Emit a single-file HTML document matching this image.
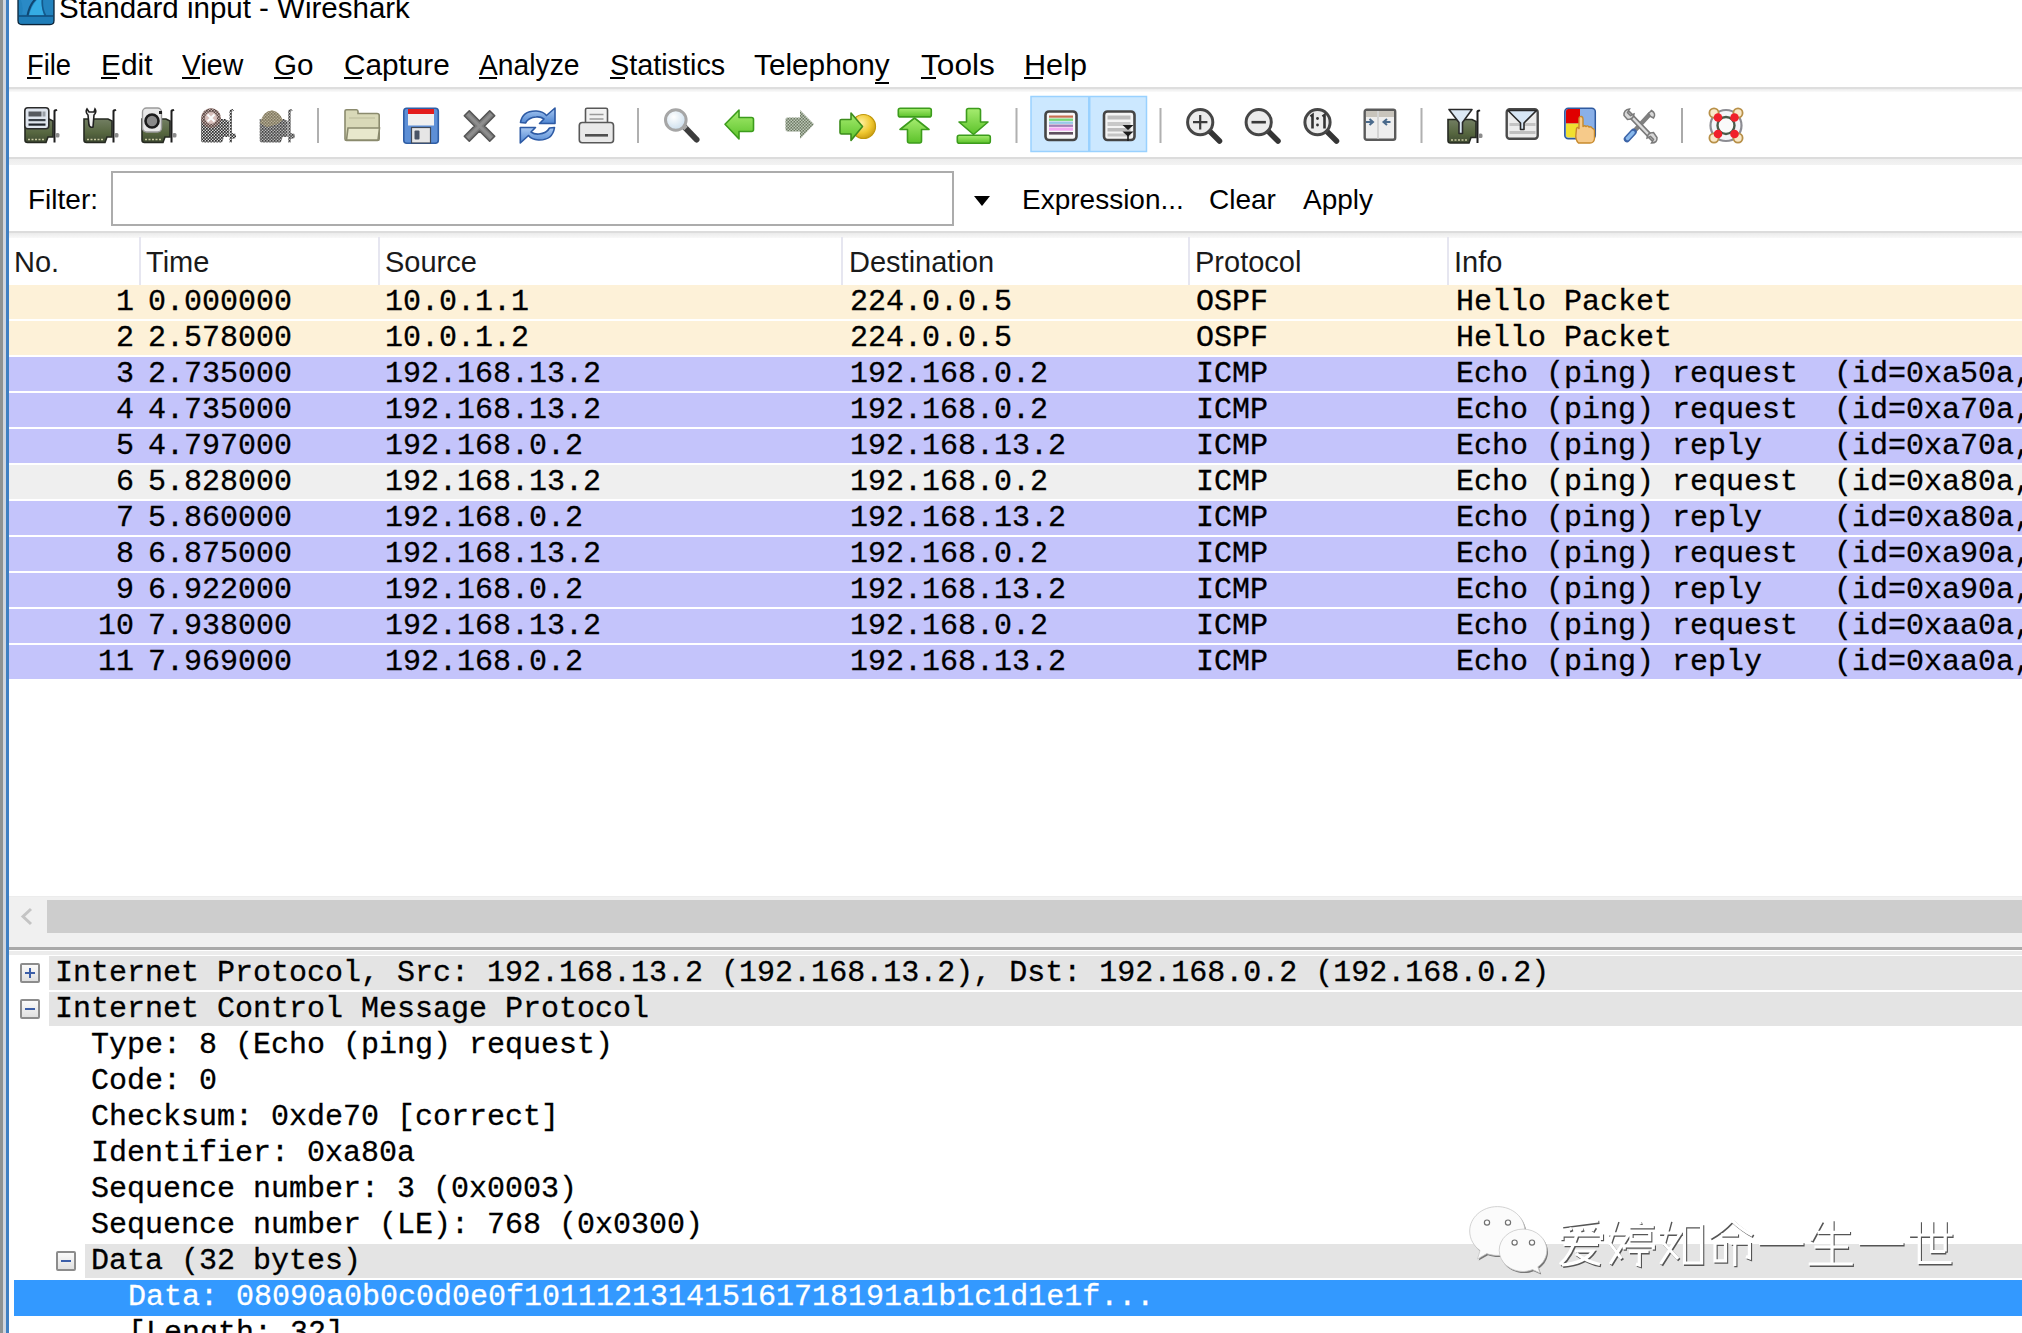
<!DOCTYPE html>
<html><head><meta charset="utf-8">
<style>
*{margin:0;padding:0;box-sizing:border-box}
html,body{width:2022px;height:1333px;overflow:hidden;background:#fff}
body{position:relative;font-family:"Liberation Sans",sans-serif;color:#000}
.a{position:absolute}
.s{font-family:"Liberation Sans",sans-serif;font-size:28px;line-height:34px;white-space:pre}
.m{font-family:"Liberation Mono",monospace;font-size:30px;line-height:34px;white-space:pre;color:#000;-webkit-text-stroke:0.3px currentColor}
.mi{position:absolute;top:48px;transform-origin:0 0;font-size:29px;line-height:34px;white-space:pre;color:#000}
.u{position:absolute;height:2px;background:#000;top:77px}
.sep{position:absolute;top:108px;width:2px;height:35px;background:#b4b4b4}
.ico{position:absolute;top:108px;width:36px;height:36px}
.hd{position:absolute;top:245px;font-size:29px;line-height:34px;white-space:pre;color:#1a1a1a}
.cd{position:absolute;top:237px;width:2px;height:48px;background:#e6e6f0}
.row{position:absolute;left:9px;width:2013px;height:34px}
.cell{position:absolute;top:0;font-family:"Liberation Mono",monospace;font-size:30px;line-height:34px;white-space:pre;-webkit-text-stroke:0.3px #000}
.trow{position:absolute;height:34px;background:#e4e4e4}
.box{position:absolute;width:20px;height:20px;border:2px solid #8c8c8c;border-radius:2px;background:linear-gradient(#fafafa,#e0e0e0)}
</style></head>
<body>
<!-- left window edge -->
<div class="a" style="left:0;top:0;width:3px;height:1333px;background:#8e9292"></div>
<div class="a" style="left:3px;top:0;width:3px;height:1333px;background:#cfd5de"></div>
<div class="a" style="left:6px;top:0;width:3px;height:1333px;background:#3f7fc2"></div>

<!-- title bar -->
<div class="a s" style="left:59px;top:-9px;font-size:29.5px;line-height:34px">Standard input - Wireshark</div>

<!-- menu -->
<div class="mi" style="left:27px;transform:scaleX(0.942)">File</div><div class="u" style="left:27px;width:14px"></div>
<div class="mi" style="left:101px;transform:scaleX(1.030)">Edit</div><div class="u" style="left:101px;width:16px"></div>
<div class="mi" style="left:182px;transform:scaleX(0.982)">View</div><div class="u" style="left:182px;width:18px"></div>
<div class="mi" style="left:274px;transform:scaleX(1.022)">Go</div><div class="u" style="left:274px;width:19px"></div>
<div class="mi" style="left:344px;transform:scaleX(1.025)">Capture</div><div class="u" style="left:344px;width:18px"></div>
<div class="mi" style="left:479px;transform:scaleX(0.975)">Analyze</div><div class="u" style="left:479px;width:18px"></div>
<div class="mi" style="left:610px;transform:scaleX(0.993)">Statistics</div><div class="u" style="left:610px;width:15px"></div>
<div class="mi" style="left:754px;transform:scaleX(1.026)">Telephony</div><div class="u" style="left:875px;width:14px;top:82px"></div>
<div class="mi" style="left:921px;transform:scaleX(1.090)">Tools</div><div class="u" style="left:921px;width:15px"></div>
<div class="mi" style="left:1024px;transform:scaleX(1.056)">Help</div><div class="u" style="left:1024px;width:19px"></div>
<div class="a" style="left:9px;top:87px;width:2013px;height:2px;background:#dedede"></div><div class="a" style="left:9px;top:89px;width:2013px;height:3px;background:linear-gradient(#ebebeb,#fbfbfb)"></div>

<!-- toolbar -->
<svg class="a" style="left:0;top:0" width="2022" height="160" viewBox="0 0 2022 160">
<defs>
 <pattern id="chk" width="3" height="3" patternUnits="userSpaceOnUse"><rect width="3" height="3" fill="#d8d8d8"/><rect width="1.7" height="1.7" fill="#2e2e2e"/><rect x="1.5" y="1.5" width="1.7" height="1.7" fill="#2e2e2e"/></pattern>
 <pattern id="chkg" width="3" height="3" patternUnits="userSpaceOnUse"><rect width="3" height="3" fill="#e8efe4"/><rect width="1.6" height="1.6" fill="#4a5a40"/><rect x="1.5" y="1.5" width="1.6" height="1.6" fill="#4a5a40"/></pattern>
 <linearGradient id="pcb" x1="0" y1="0" x2="0" y2="1"><stop offset="0" stop-color="#727e62"/><stop offset=".6" stop-color="#56663f"/><stop offset="1" stop-color="#3e4a32"/></linearGradient>
 <linearGradient id="grn" x1="0" y1="0" x2="0" y2="1"><stop offset="0" stop-color="#a6ec70"/><stop offset="1" stop-color="#5cc22a"/></linearGradient>
 <linearGradient id="blu" x1="0" y1="0" x2="0" y2="1"><stop offset="0" stop-color="#a9c9f2"/><stop offset="1" stop-color="#4f86d2"/></linearGradient>
 <radialGradient id="gold" cx=".4" cy=".35" r=".7"><stop offset="0" stop-color="#fff0a0"/><stop offset=".6" stop-color="#f0c830"/><stop offset="1" stop-color="#c89a10"/></radialGradient>
 <radialGradient id="lens" cx=".4" cy=".35" r=".7"><stop offset="0" stop-color="#ffffff"/><stop offset="1" stop-color="#c8dcec"/></radialGradient>
 <linearGradient id="tib" x1="0" y1="0" x2="0" y2="1"><stop offset="0" stop-color="#2a8cc8"/><stop offset="1" stop-color="#1a6ea8"/></linearGradient>
 <g id="nic">
   <path d="M1 12 L1 33 Q1 35.5 3.5 35.5 L22 35.5 L24 30 L29 30 L29 14 L25 12 Z" fill="url(#pcb)" stroke="#262a22" stroke-width="1.6"/>
   <path d="M4 32.5 H21" stroke="#c8c8a0" stroke-width="1.6" stroke-dasharray="2 1.5"/>
   <path d="M29.5 3.5 Q30 2 32.5 2 L33.5 3.5 L31.5 4.5 L31.5 35.5 L29.5 35.5 Z" fill="#1e1e1e"/>
   <rect x="31.5" y="26" width="4" height="4.5" rx="1.5" fill="#8c8c8c"/>
 </g>
</defs>

<!-- title icon -->
<path d="M18 -2 H54 V20.5 Q54 24.5 50 24.5 H22 Q18 24.5 18 20.5 Z" fill="#2383be" stroke="#0a2338" stroke-width="1.3"/>
<path d="M20 -2 Q24 6 22 14 L27 15 Q30 4 36 -2 Z" fill="#2a8ac6"/>
<path d="M27.5 15.5 Q30 3 37 -2" stroke="#0f4670" stroke-width="2" fill="none"/>
<path d="M29 15.5 Q32 4 38.5 -1.5 H42 Q40.5 7 44 15.5 Z" fill="#35ace4"/>
<path d="M42.5 -2 Q41.5 8 45.5 15.5" stroke="#145a8c" stroke-width="1.6" fill="none"/>
<path d="M19 16 H53" stroke="#0f4a78" stroke-width="1.6"/>
<path d="M19 17 H53 V21 Q53 23.5 50 23.5 H22 Q19 23.5 19 21 Z" fill="#1f7db8"/>
<!-- 1 interfaces -->
<g transform="translate(24,107)"><use href="#nic"/>
  <rect x="0.8" y="0.8" width="24" height="21" rx="3" fill="#dfe5ee" stroke="#2a2a2a" stroke-width="1.6"/>
  <rect x="4.5" y="4.5" width="13" height="5" fill="#565a60"/><rect x="18.5" y="4.5" width="3" height="5" fill="#9aa0a8"/>
  <rect x="4.5" y="12" width="17" height="2.2" fill="#3a4048"/><rect x="4.5" y="16.5" width="17" height="2.2" fill="#1e232a"/>
</g>
<!-- 2 options -->
<g transform="translate(83,107)"><use href="#nic"/>
  <path d="M4 2 Q2 5 5 8 L6 18 Q7 21 10 20 L11 8 Q14 5 12 2 L11 5 L6 5 Z" fill="#f2f2f2" stroke="#202020" stroke-width="1.6"/>
</g>
<!-- 3 start -->
<g transform="translate(141,107)"><use href="#nic"/>
  <rect x="1.5" y="1" width="19" height="24" rx="4" fill="#e8e8e8" stroke="#9a9a9a" stroke-width="1.4"/>
  <circle cx="11" cy="14" r="6.5" fill="#8a8a8a" stroke="#1c1c1c" stroke-width="2.6"/>
  <rect x="18" y="4" width="3" height="3" fill="#202020"/>
</g>
<!-- 4 stop (disabled) -->
<g transform="translate(200,107)">
  <path d="M1 12 L1 33 Q1 35.5 3.5 35.5 L22 35.5 L24 30 L29 30 L29 14 L25 12 Z M29.5 3.5 Q30 2 32.5 2 L34 3.5 L32 4.5 L32 26 L36 27 V31 L32 32 L32 35.5 L29.5 35.5 Z" fill="url(#chk)"/>
  <circle cx="11" cy="11" r="9.8" fill="#9a6a60"/><circle cx="11" cy="11" r="9.8" fill="url(#chk)" opacity=".6"/>
  <circle cx="11" cy="11" r="6" fill="#d8c0bc"/>
  <path d="M7.5 7.5 L14.5 14.5 M14.5 7.5 L7.5 14.5" stroke="#fafafa" stroke-width="2.2"/>
</g>
<!-- 5 restart (disabled) -->
<g transform="translate(258.7,107)">
  <path d="M1 12 L1 33 Q1 35.5 3.5 35.5 L22 35.5 L24 30 L29 30 L29 14 L25 12 Z M29.5 3.5 Q30 2 32.5 2 L34 3.5 L32 4.5 L32 26 L36 27 V31 L32 32 L32 35.5 L29.5 35.5 Z" fill="url(#chk)"/>
  <path d="M1.5 16 Q5 3 14 3.5 Q21 5 24 13 L19 17 L8 20 Z" fill="#b8a878"/><path d="M1.5 16 Q5 3 14 3.5 Q21 5 24 13 L19 17 L8 20 Z" fill="url(#chk)" opacity=".5"/>
</g>
<rect x="317" y="108" width="2" height="35" fill="#b0b0b0"/>

<!-- 6 open folder -->
<g transform="translate(344,109)">
  <path d="M1 2 Q1 0.8 2.5 0.8 H12.5 Q14 0.8 14 2.5 V4.5 H33 Q35.2 4.5 35.2 6.5 V30 Q35.2 31.5 33.5 31.5 H2.5 Q1 31.5 1 30 Z" fill="#d9d9b8" stroke="#8b8b6e" stroke-width="1.6"/>
  <path d="M4 19 H35.5 L34 31 H2.5 Z" fill="#e8e8cc" stroke="#8b8b6e" stroke-width="1.6"/>
  <path d="M5 9 H31" stroke="#c4c4a4" stroke-width="1.5"/>
</g>
<!-- 7 save -->
<g transform="translate(403,107.5)">
  <rect x="0.8" y="0.8" width="34.5" height="35" rx="3" fill="#5d8fd6" stroke="#2f5ea6" stroke-width="1.6"/>
  <rect x="5" y="1.5" width="26" height="5" fill="#e31c1c"/>
  <rect x="5" y="6.5" width="26" height="11.5" fill="#f0f0f0"/>
  <rect x="8.5" y="20" width="19" height="15.5" fill="#e6e6e6" stroke="#404a5a" stroke-width="1.2"/>
  <rect x="11.5" y="23" width="5" height="9" rx="1" fill="#4a5466"/>
</g>
<!-- 8 close X -->
<g transform="translate(463.5,110)">
  <path d="M0.8 5.8 L5.8 0.8 L16 11 L26.2 0.8 L31.2 5.8 L21 16 L31.2 26.2 L26.2 31.2 L16 21 L5.8 31.2 L0.8 26.2 L11 16 Z" fill="#7c7c7c" stroke="#555" stroke-width="1.6" stroke-linejoin="round"/>
  <path d="M4 4 L28 28 M28 4 L4 28" stroke="#8e8e8e" stroke-width="2.5"/>
</g>
<!-- 9 reload -->
<g transform="translate(519.5,107.5)">
  <path d="M1 15 Q3 3 17 3.5 Q24 4 27 8 L35.5 0.5 V16 H20 L24.5 11.5 Q21 9 16.5 9.5 Q9 10 6 15.5 Z" fill="url(#blu)" stroke="#2d5aa4" stroke-width="1.6" stroke-linejoin="round"/>
  <path d="M35 20 Q33 33 19 32.5 Q12 32 9 28 L0.8 35.5 V20 H16 L11.5 24.5 Q15 27 19.5 26.5 Q27 26 30 20.5 Z" fill="url(#blu)" stroke="#2d5aa4" stroke-width="1.6" stroke-linejoin="round"/>
</g>
<!-- 10 print -->
<g transform="translate(578.5,107.5)">
  <rect x="7" y="0.8" width="22" height="19" rx="1.5" fill="#f2f2f2" stroke="#585858" stroke-width="1.6"/>
  <path d="M11 7 H25 M11 11.5 H25" stroke="#9a9a9a" stroke-width="1.6"/>
  <rect x="0.8" y="15" width="34.2" height="20.2" rx="3" fill="#e9e9e9" stroke="#585858" stroke-width="1.6"/>
  <rect x="6.5" y="26.5" width="23" height="2.6" fill="#505050"/>
</g>
<rect x="637" y="108" width="2" height="35" fill="#b0b0b0"/>

<!-- 11 find -->
<g transform="translate(663,107.5)">
  <path d="M21 19 L33.5 32" stroke="#3c3c3c" stroke-width="6" stroke-linecap="round"/>
  <path d="M19.5 17.5 L23 21" stroke="#a8a8a8" stroke-width="5"/>
  <circle cx="12.8" cy="12.5" r="10.3" fill="url(#lens)" stroke="#a6a6a6" stroke-width="3"/>
</g>
<!-- 12 back -->
<g transform="translate(724,109)">
  <path d="M1 15.2 L15 1 V8.5 H27.5 Q29.5 8.5 29.5 10.5 V20.5 Q29.5 22.5 27.5 22.5 H15 V30 Z" fill="url(#grn)" stroke="#3c9c1c" stroke-width="1.6" stroke-linejoin="round"/>
</g>
<!-- 13 forward disabled -->
<g transform="translate(784.5,109)">
  <path d="M29.5 15.2 L15.5 1 V8.5 H3 Q1 8.5 1 10.5 V20.5 Q1 22.5 3 22.5 H15.5 V30 Z" fill="url(#chkg)"/>
</g>
<!-- 14 go to packet -->
<g transform="translate(839,112)">
  <circle cx="24.5" cy="14.5" r="12" fill="url(#gold)" stroke="#c0980c" stroke-width="1.2"/>
  <path d="M23.5 14.5 L12 1 V7.5 H2.5 Q1 7.5 1 9 V20.5 Q1 22 2.5 22 H12 V28.5 Z" fill="url(#grn)" stroke="#3c8c1c" stroke-width="1.6" stroke-linejoin="round"/>
</g>
<!-- 15 first -->
<g transform="translate(897.5,107.5)">
  <rect x="0.8" y="0.8" width="33" height="8.6" rx="2" fill="url(#grn)" stroke="#3c9c1c" stroke-width="1.6"/>
  <path d="M17 10.5 L31.5 22 H24 V33.5 Q24 35.5 22 35.5 H12 Q10 35.5 10 33.5 V22 H2.5 Z" fill="url(#grn)" stroke="#3c9c1c" stroke-width="1.6" stroke-linejoin="round"/>
</g>
<!-- 16 last -->
<g transform="translate(956.5,107.5)">
  <path d="M17 27 L31.5 14.5 H24 V3 Q24 1 22 1 H12 Q10 1 10 3 V14.5 H2.5 Z" fill="url(#grn)" stroke="#3c9c1c" stroke-width="1.6" stroke-linejoin="round"/>
  <rect x="0.8" y="27.8" width="33" height="8" rx="2" fill="url(#grn)" stroke="#3c9c1c" stroke-width="1.6"/>
</g>
<rect x="1015.5" y="108" width="2" height="35" fill="#b0b0b0"/>

<!-- pressed toggle group -->
<rect x="1031" y="96.5" width="115.5" height="55" fill="#cce8ff" stroke="#99d1ff" stroke-width="1.5"/>
<rect x="1088" y="97" width="2.5" height="54" fill="#99d1ff"/>
<!-- 17 colorize -->
<g transform="translate(1044,110)">
  <rect x="1.5" y="1.5" width="31" height="28.5" rx="3.5" fill="#f8f8f8" stroke="#454545" stroke-width="2.6"/>
  <rect x="5" y="5.5" width="24" height="2.2" fill="#c87050"/>
  <rect x="5" y="8.5" width="24" height="2.4" fill="#78d878"/>
  <rect x="5" y="11.5" width="24" height="2.4" fill="#98c8e8"/>
  <rect x="5" y="14.5" width="24" height="2.4" fill="#a080b8"/>
  <rect x="5" y="17.5" width="24" height="3.2" fill="#f4a8f4"/>
  <rect x="5" y="22" width="24" height="2.6" fill="#605060"/>
</g>
<!-- 18 auto scroll -->
<g transform="translate(1102.5,110)">
  <rect x="1.5" y="1.5" width="30.5" height="28.5" rx="3.5" fill="#f4f4f4" stroke="#454545" stroke-width="2.6"/>
  <rect x="5" y="5.5" width="23" height="4" fill="#bdbdbd"/>
  <rect x="5" y="12" width="23" height="4" fill="#c8c8c8"/>
  <rect x="5" y="18" width="23" height="3.5" fill="#bcbcbc"/>
  <rect x="5" y="23.5" width="23" height="3" fill="#c4c4c4"/>
  <path d="M20 15 H31 L25.5 20 Z M20 21.5 H31 L25.5 26.5 Z" fill="#1c1c1c"/>
  <path d="M25.5 24 V31" stroke="#1c1c1c" stroke-width="1.6"/>
</g>
<rect x="1159.5" y="108" width="2" height="35" fill="#b0b0b0"/>

<!-- 19-21 zoom -->
<g transform="translate(1186,107.5)">
  <path d="M24 24 L33.5 33.5" stroke="#353535" stroke-width="5.5" stroke-linecap="round"/>
  <circle cx="14.2" cy="14.7" r="12.6" fill="#ececec" stroke="#464646" stroke-width="3"/>
  <path d="M7 14.7 H21.4 M14.2 7.5 V21.9" stroke="#3a3a3a" stroke-width="2.2"/>
</g>
<g transform="translate(1244.5,107.5)">
  <path d="M24 24 L33.5 33.5" stroke="#353535" stroke-width="5.5" stroke-linecap="round"/>
  <circle cx="14.2" cy="14.7" r="12.6" fill="#ececec" stroke="#464646" stroke-width="3"/>
  <path d="M7 14.7 H21.4" stroke="#3a3a3a" stroke-width="2.6"/>
</g>
<g transform="translate(1303,107.5)">
  <path d="M24 24 L33.5 33.5" stroke="#353535" stroke-width="5.5" stroke-linecap="round"/>
  <circle cx="14.5" cy="14.7" r="12.6" fill="#ececec" stroke="#464646" stroke-width="3"/>
  <path d="M7.5 9 L9.5 7.5 V21 M19.5 9 L21.5 7.5 V21" stroke="#333" stroke-width="2.6" fill="none"/>
  <circle cx="14.5" cy="11" r="1.4" fill="#333"/><circle cx="14.5" cy="17.5" r="1.4" fill="#333"/>
</g>
<!-- 22 resize columns -->
<g transform="translate(1363.5,108.5)">
  <rect x="1.2" y="1.2" width="30.5" height="30" rx="2" fill="#eeeeee" stroke="#5a5a5a" stroke-width="2.4"/>
  <rect x="2.5" y="2.5" width="28" height="6" fill="#c8c4bc"/>
  <path d="M14.5 2.5 V30" stroke="#d4d4d4" stroke-width="2"/>
  <path d="M2.5 13.5 H9 M6 10.5 L9.5 13.5 L6 16.5 M27 13.5 H20.5 M23.5 10.5 L20 13.5 L23.5 16.5" stroke="#4a6a8c" stroke-width="2" fill="none"/>
</g>
<rect x="1420.5" y="108" width="2" height="35" fill="#b0b0b0"/>

<!-- 23 capture filter -->
<g transform="translate(1447,107.5)"><use href="#nic"/>
  <path d="M2 2 H25 L15.5 15 V26 L12 26 V15 Z" fill="#dce8f4" stroke="#2a2a2a" stroke-width="1.6" stroke-linejoin="round"/>
</g>
<!-- 24 display filter -->
<g transform="translate(1505.5,108)">
  <rect x="1.2" y="1.2" width="31" height="29.5" rx="3" fill="#ececec" stroke="#4a4a4a" stroke-width="2.4"/>
  <rect x="4" y="15" width="26" height="3" fill="#c4c4c4"/><rect x="4" y="23" width="26" height="3" fill="#c0c0c0"/>
  <path d="M2.5 2.5 H31 L18.5 15 V21.5 H15 V15 Z" fill="#d8e6f4" stroke="#2a2a2a" stroke-width="1.6" stroke-linejoin="round"/>
</g>
<!-- 25 coloring rules -->
<g transform="translate(1564,107.5)">
  <rect x="0.8" y="0.8" width="30.5" height="30.5" rx="3.5" fill="#8ab0e8" stroke="#2e5aa0" stroke-width="1.5"/>
  <path d="M2 4 Q2 1.5 4.5 1.5 H16 V16 H2 Z" fill="#e00000"/>
  <path d="M2 16 H15 V30 H4.5 Q2 30 2 27.5 Z" fill="#f0e030"/>
  <path d="M14.5 35.5 Q11 32 12 26 L12.5 21 Q13.5 19 15 21 V11 Q15.5 8.5 17.5 9 Q19 9.5 19 11.5 V19 Q20.5 17.5 22 19 Q23.5 17.5 25 19.5 Q27 18.5 28.5 21 Q30 21 30.5 23 V31 Q30 35.5 26 35.5 Z" fill="#f6ca8a" stroke="#c88a2c" stroke-width="1.4" stroke-linejoin="round"/>
</g>
<!-- 26 preferences -->
<g transform="translate(1622.5,107.5)">
  <path d="M4 32 L27 7" stroke="#808080" stroke-width="4.6" stroke-linecap="round"/>
  <path d="M4.5 31.5 L11 24.5" stroke="#3c64a8" stroke-width="6.5" stroke-linecap="round"/><path d="M5 31 L10.5 25" stroke="#88b8ec" stroke-width="3.5" stroke-linecap="round"/>
  <path d="M29 3 Q34 6 31 10.5 L28 9 L26 6 Z" fill="#d8d8d8" stroke="#7a7a7a" stroke-width="1.5"/>
  <path d="M6 6 L30 31" stroke="#7a7a7a" stroke-width="5.5" stroke-linecap="round"/><path d="M6 6 L30 31" stroke="#dcdcdc" stroke-width="2.5" stroke-linecap="round"/>
  <path d="M1.5 8 Q1 2 7 1.5 L5 5 L8 8 L11.5 6.5 Q11 12 5 12 Z" fill="#d8d8d8" stroke="#7a7a7a" stroke-width="1.5"/>
  <path d="M34.5 30 Q35 35.5 29 35.5 L31 32 L28 29 L24.5 30.5 Q25 25 31 25 Z" fill="#d8d8d8" stroke="#7a7a7a" stroke-width="1.5"/>
</g>
<rect x="1681" y="108" width="2" height="35" fill="#aaaaaa"/>

<!-- 27 help lifebuoy -->
<g transform="translate(1708,107.5)">
  <circle cx="18" cy="18" r="15.5" fill="#f4f4f8" stroke="#8c8c92" stroke-width="2.2"/>
  <circle cx="18" cy="18" r="8.5" fill="#fafafa" stroke="#4a5a4a" stroke-width="2.4"/>
  <circle cx="6" cy="5.5" r="4.6" fill="#f8e8c8" stroke="#b89048" stroke-width="1.8"/>
  <circle cx="30" cy="5.5" r="4.6" fill="#f8e8c8" stroke="#b89048" stroke-width="1.8"/>
  <circle cx="6" cy="30.5" r="4.6" fill="#f8e8c8" stroke="#b89048" stroke-width="1.8"/>
  <circle cx="30" cy="30.5" r="4.6" fill="#f8e8c8" stroke="#b89048" stroke-width="1.8"/>
  <circle cx="10" cy="10" r="4.3" fill="#f0202a"/><circle cx="26.5" cy="10" r="4.3" fill="#f0202a"/>
  <circle cx="10" cy="26.5" r="4.3" fill="#f0202a"/><circle cx="26.5" cy="26.5" r="4.3" fill="#f0202a"/>
</g>
</svg>

<div class="a" style="left:9px;top:157px;width:2013px;height:2px;background:#dcdcdc"></div><div class="a" style="left:9px;top:159px;width:2013px;height:6px;background:linear-gradient(#ededed,#f3f3f3)"></div>

<!-- filter bar -->
<div class="a s" style="left:28px;top:183px">Filter:</div>
<div class="a" style="left:111px;top:171px;width:843px;height:55px;border:2px solid #acacac;background:#fff"></div>
<div class="a" style="left:974px;top:196px;width:0;height:0;border-left:8px solid transparent;border-right:8px solid transparent;border-top:10px solid #000"></div>
<div class="a s" style="left:1022px;top:183px">Expression...</div>
<div class="a s" style="left:1209px;top:183px">Clear</div>
<div class="a s" style="left:1303px;top:183px">Apply</div>
<div class="a" style="left:9px;top:231px;width:2013px;height:2px;background:#dcdcdc"></div>
<div class="a" style="left:9px;top:233px;width:2013px;height:5px;background:linear-gradient(#ebebeb,#f8f8f8)"></div>

<!-- packet list header -->
<div class="hd" style="left:14px">No.</div>
<div class="hd" style="left:146px">Time</div>
<div class="hd" style="left:385px">Source</div>
<div class="hd" style="left:849px">Destination</div>
<div class="hd" style="left:1195px">Protocol</div>
<div class="hd" style="left:1454px">Info</div>
<div class="cd" style="left:139px"></div>
<div class="cd" style="left:378px"></div>
<div class="cd" style="left:841px"></div>
<div class="cd" style="left:1188px"></div>
<div class="cd" style="left:1447px"></div>

<div class="row" style="top:285px;background:#fdf1d8"><div class="cell" style="right:1888px">1</div><div class="cell" style="left:139px">0.000000</div><div class="cell" style="left:376px">10.0.1.1</div><div class="cell" style="left:841px">224.0.0.5</div><div class="cell" style="left:1187px">OSPF</div><div class="cell" style="left:1447px">Hello Packet</div></div>
<div class="row" style="top:321px;background:#fdf1d8"><div class="cell" style="right:1888px">2</div><div class="cell" style="left:139px">2.578000</div><div class="cell" style="left:376px">10.0.1.2</div><div class="cell" style="left:841px">224.0.0.5</div><div class="cell" style="left:1187px">OSPF</div><div class="cell" style="left:1447px">Hello Packet</div></div>
<div class="row" style="top:357px;background:#c4c4fb"><div class="cell" style="right:1888px">3</div><div class="cell" style="left:139px">2.735000</div><div class="cell" style="left:376px">192.168.13.2</div><div class="cell" style="left:841px">192.168.0.2</div><div class="cell" style="left:1187px">ICMP</div><div class="cell" style="left:1447px">Echo (ping) request  (id=0xa50a, seq(be/le)=1/256, ttl=128)</div></div>
<div class="row" style="top:393px;background:#c4c4fb"><div class="cell" style="right:1888px">4</div><div class="cell" style="left:139px">4.735000</div><div class="cell" style="left:376px">192.168.13.2</div><div class="cell" style="left:841px">192.168.0.2</div><div class="cell" style="left:1187px">ICMP</div><div class="cell" style="left:1447px">Echo (ping) request  (id=0xa70a, seq(be/le)=2/512, ttl=128)</div></div>
<div class="row" style="top:429px;background:#c4c4fb"><div class="cell" style="right:1888px">5</div><div class="cell" style="left:139px">4.797000</div><div class="cell" style="left:376px">192.168.0.2</div><div class="cell" style="left:841px">192.168.13.2</div><div class="cell" style="left:1187px">ICMP</div><div class="cell" style="left:1447px">Echo (ping) reply    (id=0xa70a, seq(be/le)=2/512, ttl=64)</div></div>
<div class="row" style="top:465px;background:#efefef"><div class="cell" style="right:1888px">6</div><div class="cell" style="left:139px">5.828000</div><div class="cell" style="left:376px">192.168.13.2</div><div class="cell" style="left:841px">192.168.0.2</div><div class="cell" style="left:1187px">ICMP</div><div class="cell" style="left:1447px">Echo (ping) request  (id=0xa80a, seq(be/le)=3/768, ttl=128)</div></div>
<div class="row" style="top:501px;background:#c4c4fb"><div class="cell" style="right:1888px">7</div><div class="cell" style="left:139px">5.860000</div><div class="cell" style="left:376px">192.168.0.2</div><div class="cell" style="left:841px">192.168.13.2</div><div class="cell" style="left:1187px">ICMP</div><div class="cell" style="left:1447px">Echo (ping) reply    (id=0xa80a, seq(be/le)=3/768, ttl=64)</div></div>
<div class="row" style="top:537px;background:#c4c4fb"><div class="cell" style="right:1888px">8</div><div class="cell" style="left:139px">6.875000</div><div class="cell" style="left:376px">192.168.13.2</div><div class="cell" style="left:841px">192.168.0.2</div><div class="cell" style="left:1187px">ICMP</div><div class="cell" style="left:1447px">Echo (ping) request  (id=0xa90a, seq(be/le)=4/1024, ttl=128)</div></div>
<div class="row" style="top:573px;background:#c4c4fb"><div class="cell" style="right:1888px">9</div><div class="cell" style="left:139px">6.922000</div><div class="cell" style="left:376px">192.168.0.2</div><div class="cell" style="left:841px">192.168.13.2</div><div class="cell" style="left:1187px">ICMP</div><div class="cell" style="left:1447px">Echo (ping) reply    (id=0xa90a, seq(be/le)=4/1024, ttl=64)</div></div>
<div class="row" style="top:609px;background:#c4c4fb"><div class="cell" style="right:1888px">10</div><div class="cell" style="left:139px">7.938000</div><div class="cell" style="left:376px">192.168.13.2</div><div class="cell" style="left:841px">192.168.0.2</div><div class="cell" style="left:1187px">ICMP</div><div class="cell" style="left:1447px">Echo (ping) request  (id=0xaa0a, seq(be/le)=5/1280, ttl=128)</div></div>
<div class="row" style="top:645px;background:#c4c4fb"><div class="cell" style="right:1888px">11</div><div class="cell" style="left:139px">7.969000</div><div class="cell" style="left:376px">192.168.0.2</div><div class="cell" style="left:841px">192.168.13.2</div><div class="cell" style="left:1187px">ICMP</div><div class="cell" style="left:1447px">Echo (ping) reply    (id=0xaa0a, seq(be/le)=5/1280, ttl=64)</div></div>

<!-- scrollbar -->
<div class="a" style="left:9px;top:896px;width:2013px;height:1px;background:#ececec"></div>
<div class="a" style="left:9px;top:897px;width:2013px;height:50px;background:#f0f0f0"></div>
<svg id="sarrow" class="a" style="left:18px;top:906px" width="20" height="22"><path d="M13 3 L5 10.5 L13 18" fill="none" stroke="#c4c4c4" stroke-width="3"/></svg>
<div class="a" style="left:47px;top:900px;width:1975px;height:33px;background:#cdcdcd"></div>
<div class="a" style="left:9px;top:947px;width:2013px;height:3px;background:#a9a9a9"></div>
<div class="a" style="left:9px;top:951px;width:2013px;height:4px;background:#ececec"></div>

<div class="trow" style="left:49px;top:956px;width:1973px"></div>
<div class="box" style="left:20px;top:963px"><div class="a" style="left:3px;top:7px;width:10px;height:2px;background:#3b5ea8"></div><div class="a" style="left:7px;top:3px;width:2px;height:10px;background:#3b5ea8"></div></div>
<div class="a m" style="left:55px;top:956px;color:#000">Internet Protocol, Src: 192.168.13.2 (192.168.13.2), Dst: 192.168.0.2 (192.168.0.2)</div>
<div class="trow" style="left:49px;top:992px;width:1973px"></div>
<div class="box" style="left:20px;top:999px"><div class="a" style="left:3px;top:7px;width:10px;height:2px;background:#3b5ea8"></div></div>
<div class="a m" style="left:55px;top:992px;color:#000">Internet Control Message Protocol</div>
<div class="a m" style="left:91px;top:1028px;color:#000">Type: 8 (Echo (ping) request)</div>
<div class="a m" style="left:91px;top:1064px;color:#000">Code: 0</div>
<div class="a m" style="left:91px;top:1100px;color:#000">Checksum: 0xde70 [correct]</div>
<div class="a m" style="left:91px;top:1136px;color:#000">Identifier: 0xa80a</div>
<div class="a m" style="left:91px;top:1172px;color:#000">Sequence number: 3 (0x0003)</div>
<div class="a m" style="left:91px;top:1208px;color:#000">Sequence number (LE): 768 (0x0300)</div>
<div class="trow" style="left:85px;top:1244px;width:1937px"></div>
<div class="box" style="left:56px;top:1251px"><div class="a" style="left:3px;top:7px;width:10px;height:2px;background:#3b5ea8"></div></div>
<div class="a m" style="left:91px;top:1244px;color:#000">Data (32 bytes)</div>
<div class="a" style="left:14px;top:1280px;width:2008px;height:36px;background:#3399ff"></div>
<div class="a m" style="left:128px;top:1280px;color:#fff">Data: 08090a0b0c0d0e0f101112131415161718191a1b1c1d1e1f...</div>
<div class="a m" style="left:128px;top:1316px;color:#000">[Length: 32]</div>

<svg class="a" style="left:1440px;top:1190px" width="582" height="100" viewBox="1440 1190 582 100">
<path d="M1497.3 1206.6 C1512.5 1206.6 1524.9 1217.5 1524.9 1231 C1524.9 1244.5 1512.5 1255.4 1497.3 1255.4 C1493.5 1255.4 1490 1254.8 1486.8 1253.6 L1477.5 1259 L1480 1250.5 C1473.8 1246 1469.7 1239 1469.7 1231 C1469.7 1217.5 1482.1 1206.6 1497.3 1206.6 Z" transform="translate(1.2,1.6)" fill="#777"/>
<path d="M1497.3 1206.6 C1512.5 1206.6 1524.9 1217.5 1524.9 1231 C1524.9 1244.5 1512.5 1255.4 1497.3 1255.4 C1493.5 1255.4 1490 1254.8 1486.8 1253.6 L1477.5 1259 L1480 1250.5 C1473.8 1246 1469.7 1239 1469.7 1231 C1469.7 1217.5 1482.1 1206.6 1497.3 1206.6 Z" fill="#fbfbfb" stroke="#c8c8c8" stroke-width=".8"/>
<path d="M1523 1229.1 C1536.1 1229.1 1546.8 1238.6 1546.8 1250.3 C1546.8 1257 1543.3 1263 1537.8 1266.8 L1540 1273 L1532.5 1269.6 C1529.5 1270.8 1526.3 1271.5 1523 1271.5 C1509.9 1271.5 1499.2 1262 1499.2 1250.3 C1499.2 1238.6 1509.9 1229.1 1523 1229.1 Z" transform="translate(1.2,1.6)" fill="#777"/>
<path d="M1523 1229.1 C1536.1 1229.1 1546.8 1238.6 1546.8 1250.3 C1546.8 1257 1543.3 1263 1537.8 1266.8 L1540 1273 L1532.5 1269.6 C1529.5 1270.8 1526.3 1271.5 1523 1271.5 C1509.9 1271.5 1499.2 1262 1499.2 1250.3 C1499.2 1238.6 1509.9 1229.1 1523 1229.1 Z" fill="#fbfbfb" stroke="#c8c8c8" stroke-width=".8"/>
<circle cx="1487" cy="1222.6" r="2.6" fill="#fff" stroke="#707070" stroke-width="1.2"/>
<circle cx="1508" cy="1222.6" r="2.6" fill="#fff" stroke="#707070" stroke-width="1.2"/>
<circle cx="1514.6" cy="1242.6" r="2.6" fill="#fff" stroke="#707070" stroke-width="1.2"/>
<circle cx="1532" cy="1242.6" r="2.6" fill="#fff" stroke="#707070" stroke-width="1.2"/>
<g transform="translate(1559,1219)" fill="none" stroke-linecap="butt" stroke-linejoin="miter"><path d="M39.3 2 L3 6.6 M10.7 8.7 L11.8 11.5 M22 8.7 L23 11.8 M35.6 7.6 L33 11.8 M3 21 V15.9 H42.4 V21 M4.5 25.3 H39 M17.5 16.9 Q12 36 0.9 45.5 M16 32 H34 Q26 44 3 46 M17 34.6 Q28 43 40.9 45.5" transform="translate(1.1,1.3)" stroke="#555" stroke-width="3.2"/><path d="M39.3 2 L3 6.6 M10.7 8.7 L11.8 11.5 M22 8.7 L23 11.8 M35.6 7.6 L33 11.8 M3 21 V15.9 H42.4 V21 M4.5 25.3 H39 M17.5 16.9 Q12 36 0.9 45.5 M16 32 H34 Q26 44 3 46 M17 34.6 Q28 43 40.9 45.5" stroke="#fff" stroke-width="3.2"/></g>
<g transform="translate(1608,1219)" fill="none" stroke-linecap="butt" stroke-linejoin="miter"><path d="M9 1.4 L1.7 24.2 L13.6 39.8 M20.9 14.9 L2.2 45 M0.2 14.9 H24 M31.3 2.4 L32.3 5.5 M21.4 7.6 H45.8 M23 13.3 H41.7 V20.6 H23 Z M16.2 30.5 V26.8 H45.3 V30.5 M20.9 32.5 H40.6 M31.3 32.5 V46 L28 45" transform="translate(1.1,1.3)" stroke="#555" stroke-width="3.2"/><path d="M9 1.4 L1.7 24.2 L13.6 39.8 M20.9 14.9 L2.2 45 M0.2 14.9 H24 M31.3 2.4 L32.3 5.5 M21.4 7.6 H45.8 M23 13.3 H41.7 V20.6 H23 Z M16.2 30.5 V26.8 H45.3 V30.5 M20.9 32.5 H40.6 M31.3 32.5 V46 L28 45" stroke="#fff" stroke-width="3.2"/></g>
<g transform="translate(1657,1219)" fill="none" stroke-linecap="butt" stroke-linejoin="miter"><path d="M12.9 1.4 L6.7 24.3 L21.2 39.8 M22.8 14.9 L3.6 45 M2 14 H24.9 M27.5 6.6 H44.6 V44 H27.5 Z" transform="translate(1.1,1.3)" stroke="#555" stroke-width="3.2"/><path d="M12.9 1.4 L6.7 24.3 L21.2 39.8 M22.8 14.9 L3.6 45 M2 14 H24.9 M27.5 6.6 H44.6 V44 H27.5 Z" stroke="#fff" stroke-width="3.2"/></g>
<g transform="translate(1706,1219)" fill="none" stroke-linecap="butt" stroke-linejoin="miter"><path d="M25.7 1.4 Q16 12 3.9 18.5 M25.7 1.4 Q36 11 46.5 16.4 M15.3 15.9 H32 M9 24.2 H19.5 V41.9 H9 Z M24.7 24.2 H43.4 V38.8 L40 37.5 M28.8 24.2 V47" transform="translate(1.1,1.3)" stroke="#555" stroke-width="3.2"/><path d="M25.7 1.4 Q16 12 3.9 18.5 M25.7 1.4 Q36 11 46.5 16.4 M15.3 15.9 H32 M9 24.2 H19.5 V41.9 H9 Z M24.7 24.2 H43.4 V38.8 L40 37.5 M28.8 24.2 V47" stroke="#fff" stroke-width="3.2"/></g>
<g transform="translate(1758,1219)" fill="none" stroke-linecap="butt" stroke-linejoin="miter"><path d="M1 24.5 H45.5" transform="translate(1.1,1.3)" stroke="#555" stroke-width="3.2"/><path d="M1 24.5 H45.5" stroke="#fff" stroke-width="3.2"/></g>
<g transform="translate(1808,1219)" fill="none" stroke-linecap="butt" stroke-linejoin="miter"><path d="M13.6 2 L3 21.6 M9.5 13.3 H42 M6.4 28 H40 M24 1 V45 M0.7 45 H44.8" transform="translate(1.1,1.3)" stroke="#555" stroke-width="3.2"/><path d="M13.6 2 L3 21.6 M9.5 13.3 H42 M6.4 28 H40 M24 1 V45 M0.7 45 H44.8" stroke="#fff" stroke-width="3.2"/></g>
<g transform="translate(1858,1219)" fill="none" stroke-linecap="butt" stroke-linejoin="miter"><path d="M1 24.5 H45.5" transform="translate(1.1,1.3)" stroke="#555" stroke-width="3.2"/><path d="M1 24.5 H45.5" stroke="#fff" stroke-width="3.2"/></g>
<g transform="translate(1907,1219)" fill="none" stroke-linecap="butt" stroke-linejoin="miter"><path d="M2 16 H45.5 M12.3 2 V43.5 H44.5 M24.7 2 V32.5 H38.2 M38.2 2 V32.5" transform="translate(1.1,1.3)" stroke="#555" stroke-width="3.2"/><path d="M2 16 H45.5 M12.3 2 V43.5 H44.5 M24.7 2 V32.5 H38.2 M38.2 2 V32.5" stroke="#fff" stroke-width="3.2"/></g>
</svg>
</body></html>
